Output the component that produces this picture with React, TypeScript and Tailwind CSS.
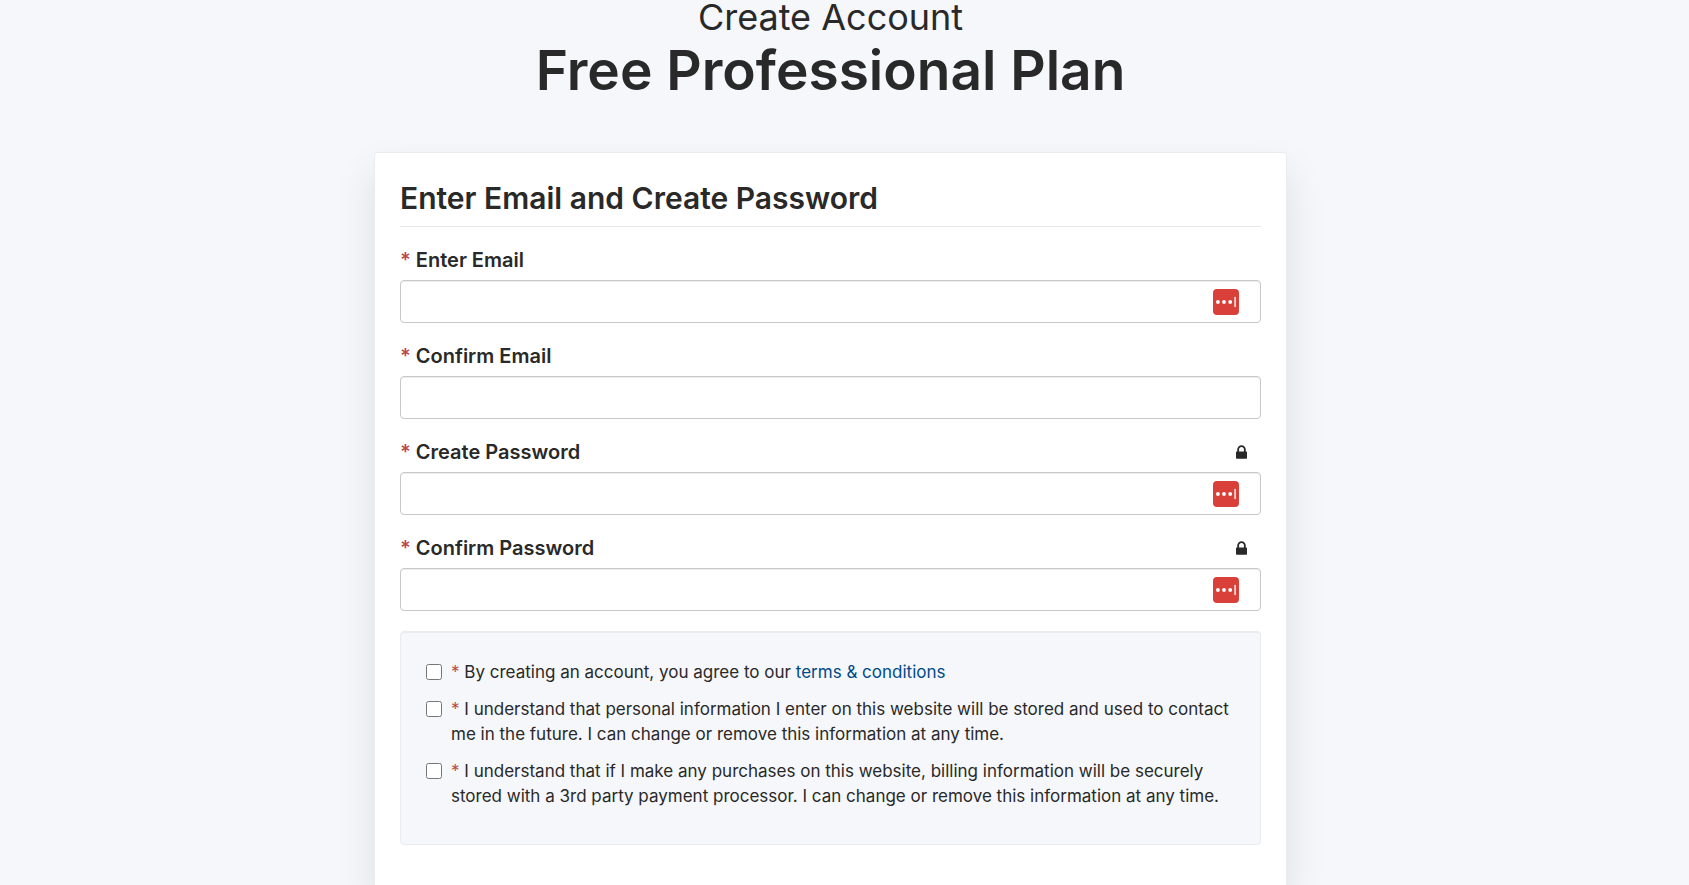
import type { ReactNode } from "react";

interface Field {
  id: string;
  label: string;
  type: "email" | "password";
  manager: boolean;
}

const fields: Field[] = [
  { id: "email", label: "Enter Email", type: "email", manager: true },
  { id: "email-confirm", label: "Confirm Email", type: "email", manager: false },
  { id: "password", label: "Create Password", type: "password", manager: true },
  { id: "password-confirm", label: "Confirm Password", type: "password", manager: true },
];

function Required() {
  return <span className="text-[#b94a48]">*</span>;
}

function LockIcon() {
  return (
    <svg viewBox="0 128 1152 1408" className="h-3.5 w-[11px]" fill="currentColor" aria-hidden="true">
      <path d="M320 768h512v-192q0-106-75-181t-181-75-181 75-75 181v192zm832 96v576q0 40-28 68t-68 28h-960q-40 0-68-28t-28-68v-576q0-40 28-68t68-28h32v-192q0-184 132-316t316-132 316 132 132 316v192h32q40 0 68 28t28 68z" />
    </svg>
  );
}

function PasswordManagerIcon() {
  return (
    <svg viewBox="0 0 26 26" className="size-[26px]" aria-hidden="true">
      <rect width="26" height="26" rx="4" fill="#d9403a" />
      <g fill="#fff">
        <circle cx="4.9" cy="13" r="1.9" />
        <circle cx="11" cy="13" r="1.9" />
        <circle cx="17.2" cy="13" r="1.9" />
        <rect x="21.4" y="7.8" width="1.4" height="10.4" rx="0.7" />
      </g>
    </svg>
  );
}

function FormField({ field }: { field: Field }) {
  return (
    <div>
      <div className="flex items-center justify-between pr-3.5">
        <label htmlFor={field.id} className="text-xl/7 font-semibold">
          <Required /> {field.label}
        </label>
        {field.type === "password" && <LockIcon />}
      </div>
      <div className="relative mt-1.5">
        <input
          id={field.id}
          type={field.type}
          required
          className="block h-[43px] w-full rounded border border-[#c8c8c8] bg-white px-3 text-lg shadow-[inset_0_1px_1px_rgba(0,0,0,0.075)] outline-none focus:border-sky-600"
        />
        {field.manager && (
          <span className="pointer-events-none absolute inset-y-0 right-[22px] flex items-center">
            <PasswordManagerIcon />
          </span>
        )}
      </div>
    </div>
  );
}

function Consent({ id, children }: { id: string; children: ReactNode }) {
  return (
    <div className="flex items-start gap-[9px]">
      <input id={id} type="checkbox" required className="mt-1 size-4 shrink-0" />
      <label htmlFor={id}>
        <Required /> {children}
      </label>
    </div>
  );
}

export default function App() {
  return (
    <main className="min-h-screen bg-[#f5f7fb] pr-7 font-['Inter',sans-serif] text-[#292929]">
      <header className="pb-[46px] text-center">
        <h1>
          <span className="block text-4xl/[34px]">Create Account</span>
          <span className="block text-[55px]/18 font-semibold">Free Professional Plan</span>
        </h1>
      </header>

      <form className="mx-auto min-h-[calc(100vh-152px)] max-w-[913px] rounded-t border border-b-0 border-[#e9ebef] bg-white px-[25px] pt-[25px] pb-10 shadow-[0_20px_40px_rgba(0,0,0,0.1)]">
        <h2 className="mb-[19px] border-b border-[#e8e8e8] pb-2 text-3xl/10 font-semibold">Enter Email and Create Password</h2>

        <div className="flex flex-col gap-[19px]">
          {fields.map((f) => (
            <FormField key={f.id} field={f} />
          ))}
        </div>

        <div className="mt-5 flex flex-col gap-3 rounded border border-[#e9ebee] bg-[#f5f7fb] px-[25px] pt-7 pb-[35px] text-[17px]/[25px] shadow-[inset_0_1px_1px_rgba(0,0,0,0.05)]">
          <Consent id="terms">
            By creating an account, you agree to our{" "}
            <a href="#terms" className="text-[#004b87] hover:underline">terms &amp; conditions</a>
          </Consent>
          <Consent id="personal-info">
            I understand that personal information I enter on this website will be stored and used to contact me in the
            future. I can change or remove this information at any time.
          </Consent>
          <Consent id="billing-info">
            I understand that if I make any purchases on this website, billing information will be securely stored with a
            3rd party payment processor. I can change or remove this information at any time.
          </Consent>
        </div>
      </form>
    </main>
  );
}
